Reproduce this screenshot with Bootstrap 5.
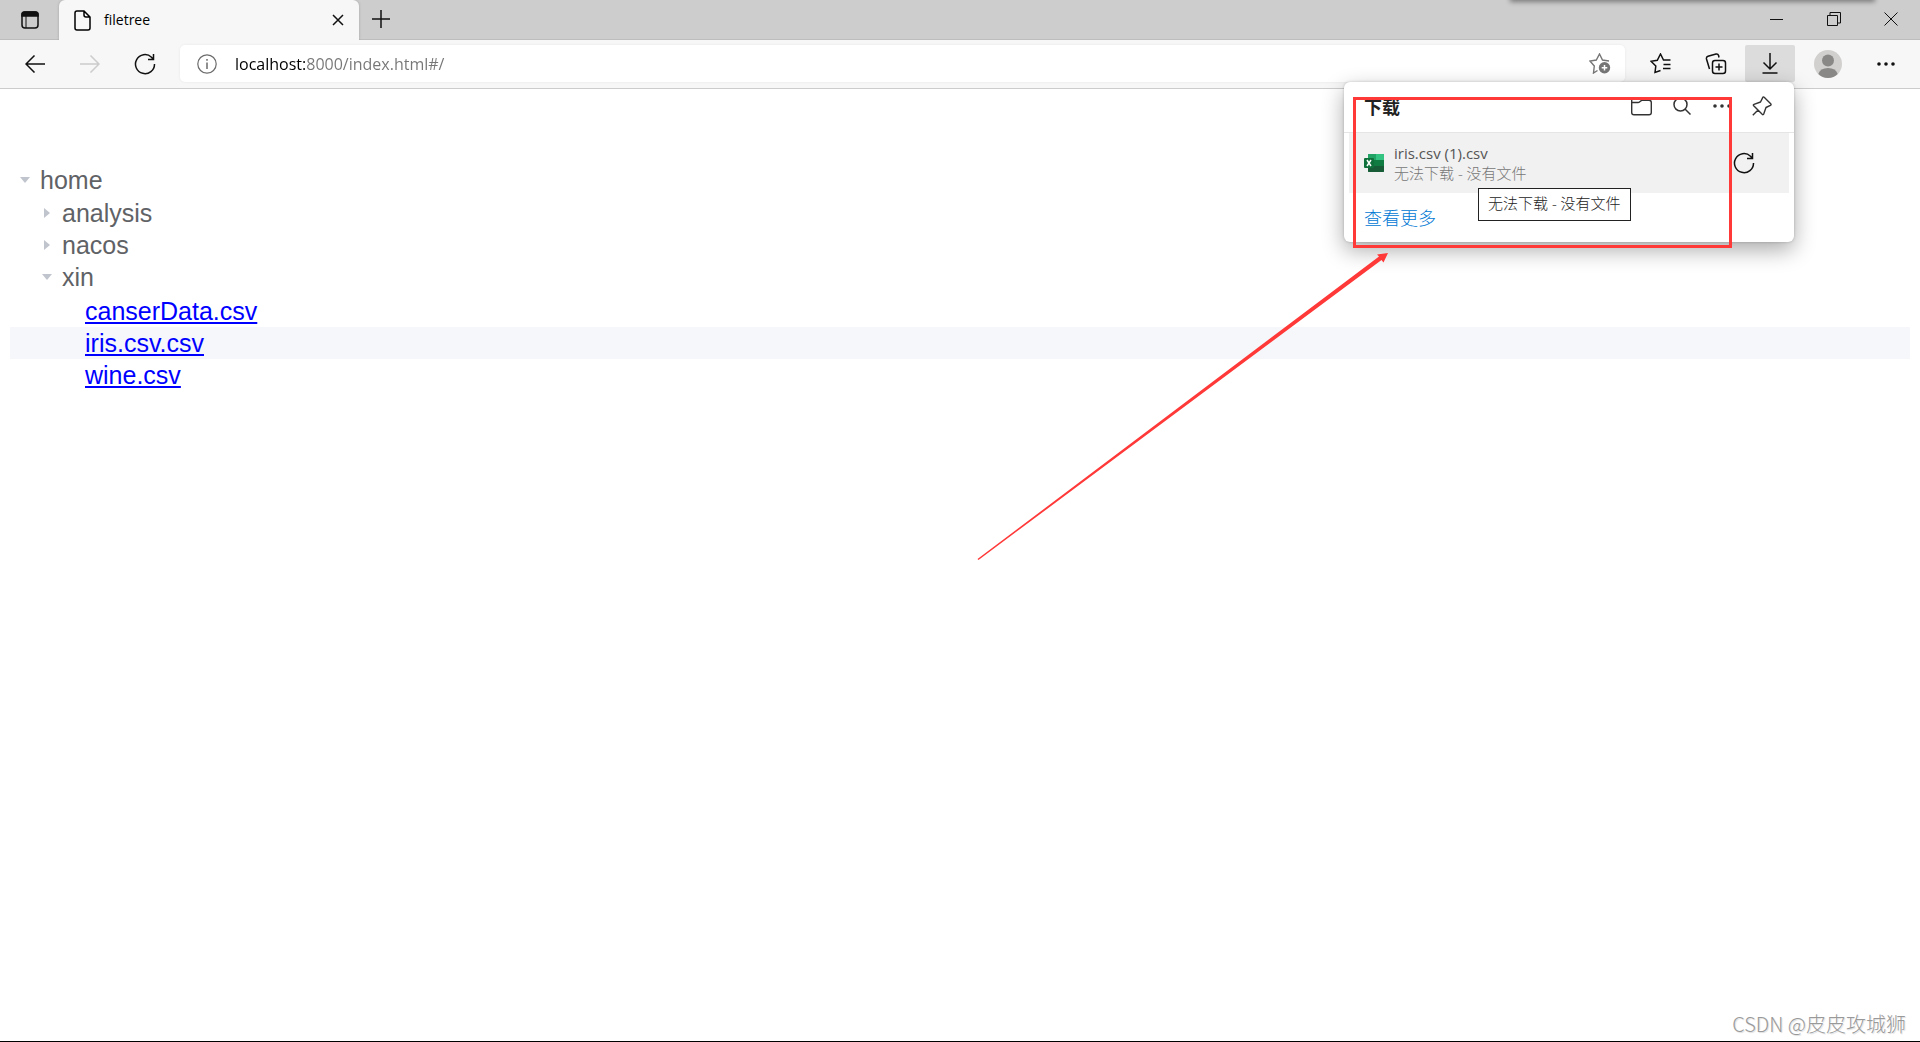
<!DOCTYPE html>
<html lang="zh-CN">
<head>
<meta charset="utf-8">
<meta name="viewport" content="width=device-width, initial-scale=1">
<title>filetree</title>
<link rel="stylesheet" href="https://cdn.jsdelivr.net/npm/bootstrap@5.3.0/dist/css/bootstrap.min.css">
<style>
:root{--ui:"Open Sans","Noto Sans CJK SC",sans-serif}
body{font-family:var(--ui);background:#fff;color:#000;border-bottom:1px solid #000}
svg{display:block;fill:none;stroke:currentColor;stroke-width:1.5;flex:none}
.icon-btn{border:0;padding:0;background:transparent;color:#111;display:flex;align-items:center;justify-content:center;border-radius:2px}
.icon-btn.faded{color:#ccc}
.tab-strip{height:40px;background:#cdcdcd;box-shadow:inset 0 -1px 0 #bdbdbd}
.tab-menu{width:59px;height:40px}
.page-tab{width:300px;background:#f7f7f7;border-radius:6px 6px 0 0;padding:0 11px 0 15px;box-shadow:0 0 3px #0003;clip-path:inset(0 -4px 0 -4px)}
.page-tab .tab-title{font-size:14px;line-height:20px;margin-left:13px}
.tab-close{width:20px;height:20px}
.new-tab{width:43px;height:38px}
.win-btns{padding-right:1px}
.win-btn{width:57px;height:38px}
.shade{left:1512px;width:361px;top:-6px;height:6px;box-shadow:0 0 5px 2px #0006}
.tool-bar{height:49px;background:#f7f7f7;border-bottom:1px solid #ccc;padding:5px 7px 0 7px}
.nav-btn{width:55px;height:37px}
.side-btn{width:50px;height:37px}
.side-btn.active{background:#dcdcdc;margin:0 8px 0 2px}
.menu-btn{margin-left:5px}
.address{height:37px;background:#fff;border-radius:5px;margin-left:8px;padding:0 14px 0 17px;box-shadow:0 0 3px #0001}
.address input{border:0;outline:0;padding:0;margin-left:18px;font-size:16px;line-height:24px;color:#767676;background:linear-gradient(90deg,#000 70px,#767676 70px);-webkit-background-clip:text;background-clip:text;-webkit-text-fill-color:transparent}
.panel{top:82px;right:126px;width:450px;background:#fff;border-radius:6px;box-shadow:0 8px 22px #0005,0 0 3px #0003;z-index:5}
.panel-head{height:51px;border-bottom:1px solid #e5e5e5;padding:0 12px 0 20px}
.panel-head h2{font-size:18px;line-height:24px;font-weight:700;color:#222}
.panel-head .icon-btn{width:40px;height:40px;color:#333;margin-bottom:2px}
.dl-item{height:60px;background:#f1f1f1;margin:0 5px;padding:0 34px 0 15px}
.dl-text{margin-left:10px;padding-bottom:1px}
.dl-name,.dl-state{font-size:15px;line-height:20px}
.dl-name{color:#555}
.dl-state{color:#767676;font-weight:300}
.more{display:block;font-size:18px;line-height:24px;padding:13px 20px 12px;color:#0078d4;text-decoration:none;font-weight:300}
.tip{left:134px;top:106px;border:1px solid #222;background:#fff;color:#222;font-size:15px;line-height:21px;padding:4px 9px 6px;white-space:nowrap;font-weight:300}
.marker{top:97px;right:188px;width:379px;height:151px;border:3px solid #ff3838;z-index:8;pointer-events:none}
.pointer-arrow{top:250px;right:530px;z-index:8;pointer-events:none}
.tree-wrap{padding:75px 10px 0;font-family:"Liberation Sans",Arial,sans-serif;font-size:25px;line-height:32px;color:#606266;flex:1}
.tree-wrap ul{list-style:none;margin:0;padding:0}
.tree-wrap ul ul{padding-top:1px}
.tree-wrap ul ul ul{padding-top:2px}
.node{display:flex;align-items:center;height:32px}
.node a{color:#00f;text-decoration:underline}
.node.hovered{background:#f5f7fa}
.lv1{padding-left:22px}.lv2{padding-left:45px}
.caret{width:30px;border:0;padding:0;background:none;display:flex;justify-content:center;color:#c0c4cc}
.caret svg{fill:currentColor;stroke:none}
.leaf{width:30px}
.credit{font-size:20px;line-height:28px;font-family:"Noto Sans CJK SC",sans-serif;font-weight:300;color:#999;text-shadow:-1px -1px 0 #fff,1px 1px 1px #ddd;padding:0 14px 3px 0;text-align:right}
</style>
</head>
<body class="d-flex flex-column min-vh-100 position-relative overflow-hidden">
<header>
  <div class="tab-strip d-flex position-relative">
    <button class="icon-btn tab-menu" aria-label="标签页操作"><svg width="20" height="20" viewBox="0 0 20 20"><rect x="2" y="2" width="16" height="16" rx="3"/><path d="M2 6V4.500Q2 2 4.500 2h11Q18 2 18 4.500V6z" fill="currentColor"/><path d="M6 6v12" stroke-width="1"/></svg></button>
    <div class="page-tab d-flex align-items-center">
      <svg width="17" height="21" viewBox="0 0 17 21"><path d="M3 1h7l6 6v11q0 2-2 2H3q-2 0-2-2V3q0-2 2-2zM10 1v4q0 2 2 2h4"/></svg>
      <span class="tab-title">filetree</span>
      <button class="icon-btn tab-close ms-auto" aria-label="关闭标签页"><svg width="12" height="12" viewBox="0 0 12 12"><path d="M1 1l10 10M11 1L1 11"/></svg></button>
    </div>
    <button class="icon-btn new-tab" aria-label="新建标签页"><svg width="18" height="18" viewBox="0 0 18 18"><path d="M9 0v18M0 9h18"/></svg></button>
    <div class="win-btns d-flex ms-auto">
      <button class="icon-btn win-btn" aria-label="最小化"><svg width="13" height="13" viewBox="0 0 13 13"><path d="M0 6.500h13" stroke-width="1"/></svg></button>
      <button class="icon-btn win-btn" aria-label="还原"><svg width="14" height="14" viewBox="0 0 14 14"><path d="M.5 3.500h10v10H.5zM3 3.500v-3h10.500v10.500h-3" stroke-width="1"/></svg></button>
      <button class="icon-btn win-btn" aria-label="关闭"><svg width="14" height="14" viewBox="0 0 14 14"><path d="M.5.5l13 13M13.500.5l-13 13" stroke-width="1"/></svg></button>
    </div>
    <div class="shade position-absolute"></div>
  </div>
  <div class="tool-bar d-flex align-items-start">
    <button class="icon-btn nav-btn" aria-label="后退"><svg width="20" height="18" viewBox="0 0 20 18"><path d="M20 9H1M9.500.5L1 9l8.500 8.500"/></svg></button>
    <button class="icon-btn nav-btn faded" aria-label="前进"><svg width="20" height="18" viewBox="0 0 20 18"><path d="M0 9h19M10.500.5L19 9l-8.500 8.500"/></svg></button>
    <button class="icon-btn nav-btn" aria-label="刷新"><svg width="22" height="22" viewBox="0 0 22 22"><path d="M20.500 11A9.500 9.500 0 1 1 17.500 4.200L19.500 6.500M19.500 1v5.500H14"/></svg></button>
    <div class="address d-flex align-items-center flex-grow-1">
      <svg width="20" height="20" viewBox="0 0 20 20" color="#6b6b6b"><circle cx="10" cy="10" r="9.200" stroke-width="1.200"/><path d="M10 8.500V15M10 5v1.700"/></svg>
      <input class="flex-grow-1" type="text" aria-label="地址栏" value="localhost:8000/index.html#/">
      <button class="icon-btn" aria-label="添加到收藏夹"><svg width="22" height="21" viewBox="0 0 22 21" color="#767676"><path d="M8.500 17.500L4.500 20l.8-7L1 8l6.300-1L10.500 1l3 6L20 8" stroke-width="1.400"/><circle cx="15.500" cy="14.800" r="5.700" fill="currentColor" stroke="none"/><path d="M15.500 12v5.600M12.700 14.800h5.600" stroke="#fff"/></svg></button>
    </div>
    <div class="d-flex">
      <button class="icon-btn nav-btn ms-2" aria-label="收藏夹"><svg width="22" height="21" viewBox="0 0 22 21"><path d="M10.500 17.500L5 19.500l.8-6.500L1 8.300l6.300-1L10.500 1l3 6H20.500M13.500 11.500h7M13 15.500h7.500"/></svg></button>
      <button class="icon-btn nav-btn" aria-label="集锦"><svg width="22" height="22" viewBox="0 0 22 22"><rect x="7.500" y="7.500" width="13" height="13" rx="2.500"/><path d="M14 10.500v7M10.500 14h7M4.500 16L1.500 6q-.5-2 1.500-2.700L11 1q2-.4 2.600 1.500L14 4.500"/></svg></button>
      <button class="icon-btn side-btn active" aria-label="下载"><svg width="16" height="21" viewBox="0 0 16 21"><path d="M8 0v16M1.500 9.500L8 16l6.500-6.500M.5 20h15"/></svg></button>
      <button class="icon-btn side-btn" aria-label="个人资料"><svg width="28" height="28" viewBox="0 0 28 28"><g stroke="none"><circle cx="14" cy="14" r="14" fill="#d2d0ce"/><circle cx="14" cy="10.500" r="6" fill="#8a8886"/><path d="M4.300 24Q6 18 14 18t9.700 6A14 14 0 0 1 4.300 24z" fill="#8a8886"/></g></svg></button>
      <button class="icon-btn nav-btn menu-btn" aria-label="设置及其他"><svg width="18" height="4" viewBox="0 0 18 4"><path d="M.2 2a1.800 1.800 0 1 0 3.600 0a1.800 1.800 0 1 0-3.600 0M7.200 2a1.800 1.800 0 1 0 3.600 0a1.800 1.800 0 1 0-3.600 0M14.200 2a1.800 1.800 0 1 0 3.600 0a1.800 1.800 0 1 0-3.600 0" fill="currentColor" stroke="none"/></svg></button>
    </div>
  </div>
</header>

<section class="panel position-absolute" aria-label="下载">
  <div class="panel-head d-flex align-items-center">
    <h2 class="m-0 me-auto">下载</h2>
    <button class="icon-btn" aria-label="打开下载文件夹"><svg width="22" height="19" viewBox="0 0 22 19"><path d="M3 .7h5l3 2.500h7q2.300 0 2.300 2.300V15.500q0 2.300-2.300 2.300H3q-2.300 0-2.300-2.300V3q0-2.300 2.300-2.300zM.7 5.500H7q1 0 1.800-.8l2.200-1.500" stroke-width="1.400"/></svg></button>
    <button class="icon-btn" aria-label="搜索下载"><svg width="18" height="18" viewBox="0 0 18 18"><circle cx="7.500" cy="7.500" r="6.500"/><path d="M12 12l5.500 5.500"/></svg></button>
    <button class="icon-btn" aria-label="更多选项"><svg width="18" height="4" viewBox="0 0 18 4"><path d="M.2 2a1.800 1.800 0 1 0 3.600 0a1.800 1.800 0 1 0-3.600 0M7.200 2a1.800 1.800 0 1 0 3.600 0a1.800 1.800 0 1 0-3.600 0M14.200 2a1.800 1.800 0 1 0 3.600 0a1.800 1.800 0 1 0-3.600 0" fill="currentColor" stroke="none"/></svg></button>
    <button class="icon-btn" aria-label="固定下载"><svg width="20" height="20" viewBox="0 0 20 20"><path d="M12.200 1.300q-.9-.9-1.500.3L8.500 6 2 8.300q-1.200.5-.3 1.500l8.500 8.500q1 .9 1.500-.3L14 11.500l4.400-2.200q1.200-.7.300-1.600zM6 14L.8 19.200" stroke-width="1.400" stroke-linejoin="round"/></svg></button>
  </div>
  <div class="dl-item d-flex align-items-center">
    <svg width="20" height="20" viewBox="0 0 20 20"><g stroke="none"><rect x="4" y="1" width="16" height="18" rx="1" fill="#107c41"/><path d="M5 1h7v6H4V2q0-1 1-1z" fill="#21a366"/><path d="M12 1h7q1 0 1 1v5h-8z" fill="#33c481"/><path d="M4 13h16v5q0 1-1 1H5q-1 0-1-1z" fill="#185c37"/><path d="M12 7h8v6h-8z" fill="#107c41"/><rect y="5" width="10" height="10" rx="1" fill="#0f703b"/></g><path d="M3 7l4 6M7 7l-4 6" stroke="#fff"/></svg>
    <div class="dl-text me-auto"><div class="dl-name">iris.csv (1).csv</div><div class="dl-state">无法下载 - 没有文件</div></div>
    <button class="icon-btn" aria-label="重试"><svg width="22" height="22" viewBox="0 0 22 22"><path d="M20.500 11A9.500 9.500 0 1 1 17.500 4.200L19.500 6.500M19.500 1v5.500H14"/></svg></button>
  </div>
  <a class="more" href="#">查看更多</a>
  <div class="tip position-absolute" role="tooltip">无法下载 - 没有文件</div>
</section>
<div class="marker position-absolute"></div>
<svg class="pointer-arrow position-absolute" width="415" height="312" viewBox="0 0 415 312"><path d="M2.500 309L404 6.500 402 4.500 413 3 408.500 12.500 406.500 10 3.500 310z" fill="#ff3838" stroke="none"/></svg>

<main class="tree-wrap">
  <ul>
    <li><div class="node"><button class="caret" aria-label="折叠 home"><svg width="10" height="6" viewBox="0 0 10 6"><path d="M0 0h10L5 6z"/></svg></button>home</div>
      <ul>
        <li><div class="node lv1"><button class="caret" aria-label="展开 analysis"><svg width="6" height="10" viewBox="0 0 6 10"><path d="M0 0v10l6-5z"/></svg></button>analysis</div></li>
        <li><div class="node lv1"><button class="caret" aria-label="展开 nacos"><svg width="6" height="10" viewBox="0 0 6 10"><path d="M0 0v10l6-5z"/></svg></button>nacos</div></li>
        <li><div class="node lv1"><button class="caret" aria-label="折叠 xin"><svg width="10" height="6" viewBox="0 0 10 6"><path d="M0 0h10L5 6z"/></svg></button>xin</div>
          <ul>
            <li><div class="node lv2"><span class="leaf"></span><a href="#">canserData.csv</a></div></li>
            <li><div class="node lv2 hovered"><span class="leaf"></span><a href="#">iris.csv.csv</a></div></li>
            <li><div class="node lv2"><span class="leaf"></span><a href="#">wine.csv</a></div></li>
          </ul>
        </li>
      </ul>
    </li>
  </ul>
</main>
<footer class="credit">CSDN @皮皮攻城狮</footer>
<script src="https://cdn.jsdelivr.net/npm/bootstrap@5.3.0/dist/js/bootstrap.bundle.min.js"></script>
</body>
</html>
